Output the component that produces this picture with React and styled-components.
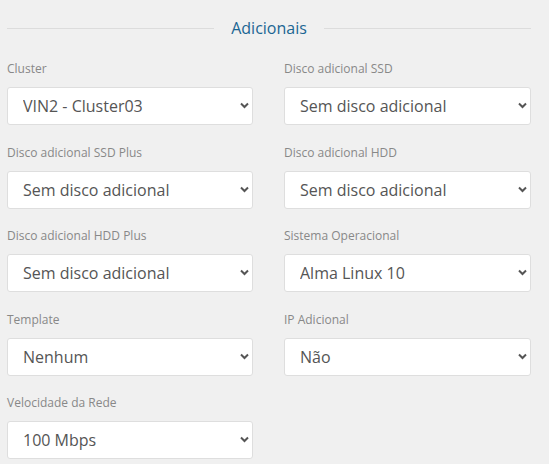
import styled, { createGlobalStyle } from 'styled-components';

const GlobalStyle = createGlobalStyle`
  body {
    margin: 0;
    background: #f0f0f0;
    font-family: "Open Sans", "Liberation Sans", sans-serif;
  }
`;

const Container = styled.div`
  width: 524px;
  padding: 14px 7px 0;
`;

const Heading = styled.div`
  display: flex;
  align-items: center;
  gap: 17px;
  height: 28px;
  margin-bottom: 18px;

  &::before,
  &::after {
    content: '';
    flex: 1;
    height: 1px;
    background: #dcdcdc;
  }

  h2 {
    margin: 0;
    font-size: 16px;
    font-weight: 400;
    color: #1b6693;
  }
`;

const Grid = styled.div`
  display: grid;
  grid-template-columns: 246px 247px;
  column-gap: 31px;
  row-gap: 18.5px;
`;

const Field = styled.div`
  display: flex;
  flex-direction: column;
`;

const Label = styled.label`
  font-size: 12px;
  line-height: 17px;
  color: #888;
  margin-bottom: 10px;
`;

const SelectWrap = styled.div`
  position: relative;
  height: 38px;
`;

const Select = styled.select`
  appearance: none;
  width: 100%;
  height: 38px;
  box-sizing: border-box;
  border: 1px solid #dedede;
  border-radius: 3px;
  background: #fff;
  padding: 0 24px 0 15px;
  font-family: "Open Sans", "Liberation Sans", sans-serif;
  font-size: 16px;
  color: #555;
  outline: none;
`;

const Chevron = styled.svg`
  position: absolute;
  right: 4px;
  top: 15px;
  width: 9px;
  height: 7px;
  pointer-events: none;
`;

const fields = [
  ['Cluster', 'VIN2 - Cluster03'],
  ['Disco adicional SSD', 'Sem disco adicional'],
  ['Disco adicional SSD Plus', 'Sem disco adicional'],
  ['Disco adicional HDD', 'Sem disco adicional'],
  ['Disco adicional HDD Plus', 'Sem disco adicional'],
  ['Sistema Operacional', 'Alma Linux 10'],
  ['Template', 'Nenhum'],
  ['IP Adicional', 'Não'],
  ['Velocidade da Rede', '100 Mbps'],
];

const App = () => {
  return (
    <Container>
      <GlobalStyle />
      <Heading>
        <h2>Adicionais</h2>
      </Heading>
      <Grid>
        {fields.map(([label, value]) => (
          <Field key={label}>
            <Label>{label}</Label>
            <SelectWrap>
              <Select defaultValue={value}>
                <option>{value}</option>
              </Select>
              <Chevron viewBox="0 0 9 7">
                <path d="M1 1.5 L4.5 5 L8 1.5" fill="none" stroke="#555" strokeWidth="2" />
              </Chevron>
            </SelectWrap>
          </Field>
        ))}
      </Grid>
    </Container>
  );
};

export default App;
